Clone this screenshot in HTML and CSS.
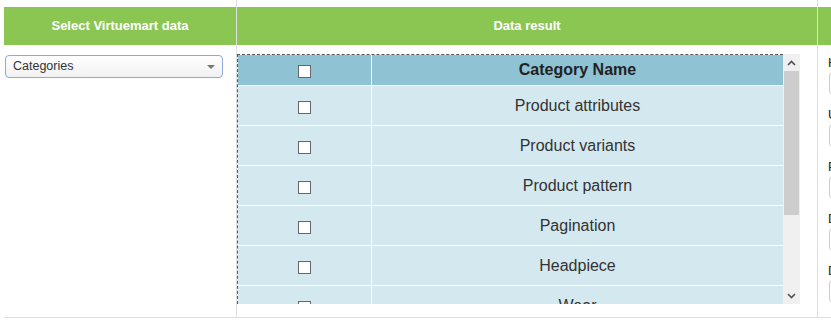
FILE: index.html
```html
<!DOCTYPE html>
<html lang="en">
<head>
  <meta charset="UTF-8">
  <title>Virtuemart data import</title>
  <link rel="stylesheet" href="styles.css">
</head>
<body>

  <div class="page">

    <!-- ===== Source column ===== -->
    <div class="col col-source">
      <div class="col-head">Select Virtuemart data</div>
      <div class="col-body">
        <div class="select">Categories<span class="caret"></span></div>
      </div>
    </div>

    <!-- ===== Result column ===== -->
    <div class="col col-result">
      <div class="col-head">Data result</div>
      <div class="col-body">
        <div class="scrollbox">
          <div class="grid-wrap">
            <table class="result">
              <thead>
                <tr>
                  <th class="check"><span class="box"></span></th>
                  <th>Category Name</th>
                </tr>
              </thead>
              <tbody>
                <tr><td class="check"><span class="box"></span></td><td>Product attributes</td></tr>
                <tr><td class="check"><span class="box"></span></td><td>Product variants</td></tr>
                <tr><td class="check"><span class="box"></span></td><td>Product pattern</td></tr>
                <tr><td class="check"><span class="box"></span></td><td>Pagination</td></tr>
                <tr><td class="check"><span class="box"></span></td><td>Headpiece</td></tr>
                <tr><td class="check"><span class="box"></span></td><td>Wear</td></tr>
                <tr><td class="check"><span class="box"></span></td><td>Accessories</td></tr>
              </tbody>
            </table>
          </div>
          <div class="scrollbar">
            <div class="sb-btn">
              <svg width="9" height="6" viewBox="0 0 9 6"><path d="M1 5 L4.5 1.5 L8 5" fill="none" stroke="#505050" stroke-width="1.6"/></svg>
            </div>
            <div class="sb-thumb"></div>
            <div class="sb-space"></div>
            <div class="sb-btn">
              <svg width="9" height="6" viewBox="0 0 9 6"><path d="M1 1 L4.5 4.5 L8 1" fill="none" stroke="#505050" stroke-width="1.6"/></svg>
            </div>
          </div>
        </div>
      </div>
    </div>

    <!-- ===== Connection column ===== -->
    <div class="col col-conn">
      <div class="col-head"></div>
      <div class="col-body">
        <label>Host</label>
        <div class="field"></div>
        <label>User</label>
        <div class="field"></div>
        <label>Password</label>
        <div class="field"></div>
        <label>Database</label>
        <div class="field"></div>
        <label>Db prefix</label>
        <div class="field"></div>
      </div>
    </div>

  </div>

</body>
</html>
```

FILE: styles.css
```css
/* ===== Basic Reset ===== */
html, body {
  overflow: hidden;
}
body {
  margin: 0;
  font-family: "Liberation Sans", Arial, sans-serif;
  color: #333;
  background: #fff;
}

/* ===== Page columns ===== */
.page {
  display: flex;
  margin-left: 4px;
  width: 1100px;
  height: 317px;
  border-bottom: 1px solid #dedede;
}
.col {
  flex: none;
  padding-top: 7px;
  border-right: 1px solid #dedede;
}
.col-source { width: 232px; }
.col-result { width: 580px; }
.col-conn   { width: 260px; }

.col-head {
  height: 38px;
  line-height: 38px;
  background: #8bc653;
  color: #fff;
  font-size: 13px;
  font-weight: bold;
  text-align: center;
}

/* ===== Select box ===== */
.col-source .col-body {
  padding: 10px 0 0 1px;
}
.select {
  position: relative;
  width: 218px;
  height: 23px;
  box-sizing: border-box;
  padding-left: 7px;
  border: 1px solid #8ea8d8;
  border-radius: 4px;
  background: linear-gradient(#fff, #f1f1f1);
  font-size: 12.5px;
  line-height: 21px;
  color: #333;
}
.caret {
  position: absolute;
  right: 7px;
  top: 9px;
  border-left: 4px solid transparent;
  border-right: 4px solid transparent;
  border-top: 4px solid #777;
}

/* ===== Result grid ===== */
.col-result .col-body {
  padding-top: 9px;
}
.scrollbox {
  display: flex;
  width: 563px;
  height: 250px;
}
.grid-wrap {
  flex: 1;
  overflow: hidden;
  border-top: 1px dashed #555;
  border-left: 1px dashed #555;
}
.result {
  width: 100%;
  border-collapse: collapse;
  font-size: 16px;
}
.result th, .result td {
  padding: 0;
  text-align: center;
  border-bottom: 1px solid #fff;
}
.result th {
  height: 30px;
  background: #8fc3d3;
  color: #222;
  font-weight: bold;
}
.result td {
  height: 38px;
  padding-top: 1px;
  background: #d4e8f0;
  color: #333;
}
.result .check {
  width: 133px;
  border-right: 1px solid #fff;
}
.box {
  display: inline-block;
  width: 11px;
  height: 11px;
  border: 1px solid #666;
  background: #fff;
  vertical-align: middle;
  margin-top: 2px;
}

/* ===== Fake scrollbar ===== */
.scrollbar {
  display: flex;
  flex-direction: column;
  width: 17px;
  background: #f0f0f0;
}
.sb-btn {
  height: 17px;
  display: flex;
  align-items: center;
  justify-content: center;
}
.sb-thumb {
  height: 144px;
  margin: 0 1px;
  background: #cdcdcd;
}
.sb-space { flex: 1; }

/* ===== Connection form ===== */
.col-conn .col-body {
  padding: 10px 0 0 10px;
}
.col-conn label {
  display: block;
  height: 15px;
  margin-bottom: 2px;
  font-size: 13px;
  line-height: 15px;
  color: #222;
}
.field {
  width: 200px;
  height: 23px;
  box-sizing: border-box;
  margin: 0 0 12px 1px;
  border: 1px solid #ccc;
  border-radius: 4px;
}
```
